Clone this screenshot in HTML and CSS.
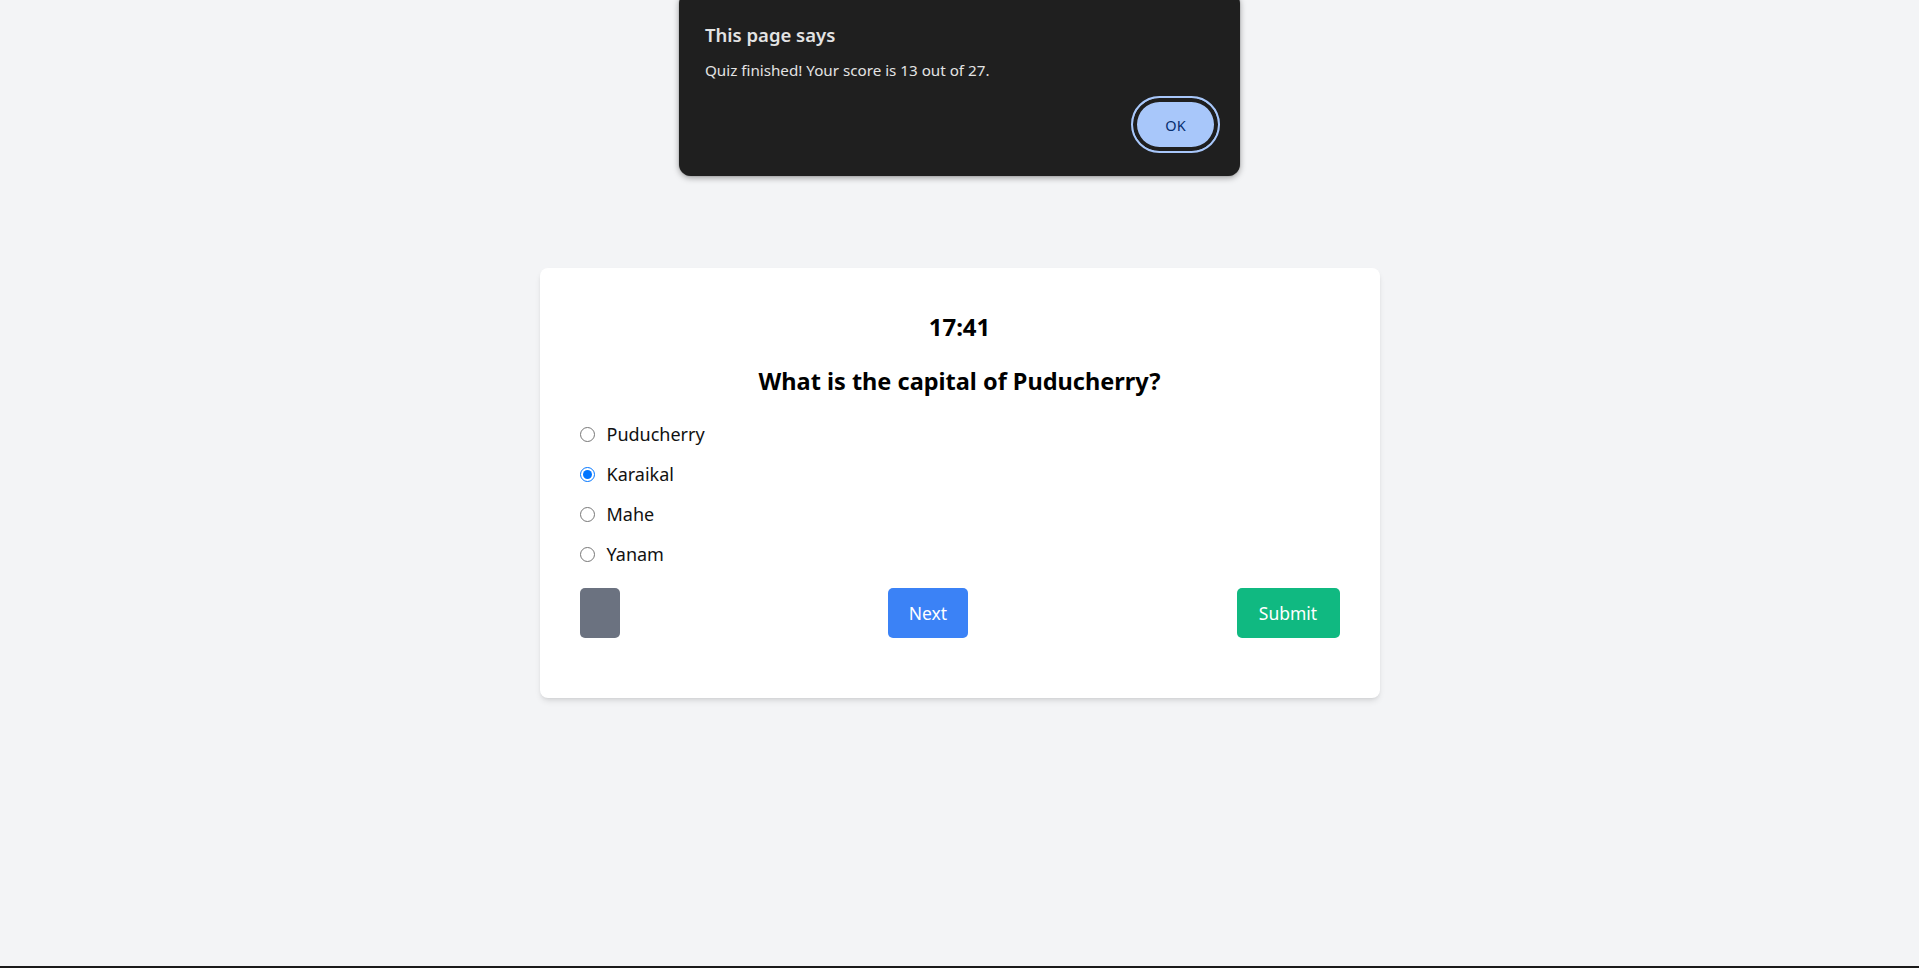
FILE: index.html
```html
<!DOCTYPE html>
<html lang="en">
<head>
<meta charset="utf-8">
<title>Quiz</title>
<link rel="stylesheet" href="styles.css">
</head>
<body>
<div class="page">
  <main class="card">
    <div class="timer">17:41</div>
    <h2 class="question">What is the capital of Puducherry?</h2>
    <div class="options">
      <label class="option"><input type="radio" name="answer" class="radio"><span>Puducherry</span></label>
      <label class="option"><input type="radio" name="answer" class="radio" checked><span>Karaikal</span></label>
      <label class="option"><input type="radio" name="answer" class="radio"><span>Mahe</span></label>
      <label class="option"><input type="radio" name="answer" class="radio"><span>Yanam</span></label>
    </div>
    <div class="actions">
      <button class="btn btn-prev" type="button"></button>
      <button class="btn btn-next" type="button">Next</button>
      <button class="btn btn-submit" type="button">Submit</button>
    </div>
  </main>
</div>
<div class="bottom-rule"></div>

<div class="alert" role="alertdialog">
  <div class="alert-title">This page says</div>
  <div class="alert-message">Quiz finished! Your score is 13 out of 27.</div>
  <div class="alert-actions">
    <button class="alert-ok" type="button">OK</button>
  </div>
</div>
</body>
</html>
```

FILE: styles.css
```css
* { box-sizing: border-box; }

html, body {
  margin: 0;
  padding: 0;
}

body {
  background: #f3f4f6;
  font-family: "Noto Sans", "Open Sans", "Liberation Sans", sans-serif;
  color: #111;
  min-height: 968px;
  display: flex;
  flex-direction: column;
}

.page {
  height: 966px;
  display: flex;
  align-items: center;
  justify-content: center;
}

.bottom-rule {
  height: 2px;
  background: #1a1a1a;
}

.card {
  width: 840px;
  background: #fff;
  border-radius: 8px;
  box-shadow: 0 4px 6px -1px rgba(0,0,0,0.1), 0 2px 4px -2px rgba(0,0,0,0.1);
  padding: 43px 40px 60px;
}

.timer {
  text-align: center;
  font-size: 24px;
  line-height: 32px;
  font-weight: 700;
  color: #000;
  margin-bottom: 22px;
}

.question {
  margin: 0 0 23px;
  text-align: center;
  font-size: 23.5px;
  line-height: 32px;
  font-weight: 700;
  color: #000;
}

.options {
  display: flex;
  flex-direction: column;
  gap: 12px;
}

.option {
  display: flex;
  align-items: center;
  height: 28px;
  font-size: 18px;
  color: #111;
}

.radio {
  width: 15px;
  height: 15px;
  margin: 0 12px 0 0;
}

.actions {
  margin-top: 20px;
  display: flex;
  justify-content: space-between;
  align-items: center;
}

.btn {
  height: 50px;
  border: none;
  border-radius: 5px;
  color: #fff;
  font-family: inherit;
  font-size: 17.5px;
  padding: 0 20px;
}

.btn-prev { width: 40px; background: #6b7280; }
.btn-next { width: 80px; padding: 0; background: #3b82f6; }
.btn-submit { width: 103px; padding: 0; background: #10b981; }

/* browser alert dialog */
.alert {
  position: absolute;
  top: -8px;
  left: 679px;
  width: 561px;
  height: 184px;
  background: #1f1f1f;
  border-radius: 12px;
  box-shadow: 0 2px 6px rgba(0,0,0,0.35), 0 0 1px rgba(0,0,0,0.5);
  padding: 31px 20px 0 26px;
  color: #e3e3e3;
}

.alert-title {
  font-size: 18.5px;
  line-height: 24px;
  font-weight: 600;
}

.alert-message {
  margin-top: 13px;
  font-size: 15.2px;
  line-height: 20px;
}

.alert-actions {
  display: flex;
  justify-content: flex-end;
  margin-top: 16px;
}

.alert-ok {
  width: 89px;
  height: 57px;
  border-radius: 29px;
  background: #a8c7fa;
  color: #062e6f;
  font-family: inherit;
  font-size: 14.5px;
  border: 2px solid #a8c7fa;
  box-shadow: inset 0 0 0 2px #1f1f1f, inset 0 0 0 4px #1f1f1f;
  padding: 0;
}
```
